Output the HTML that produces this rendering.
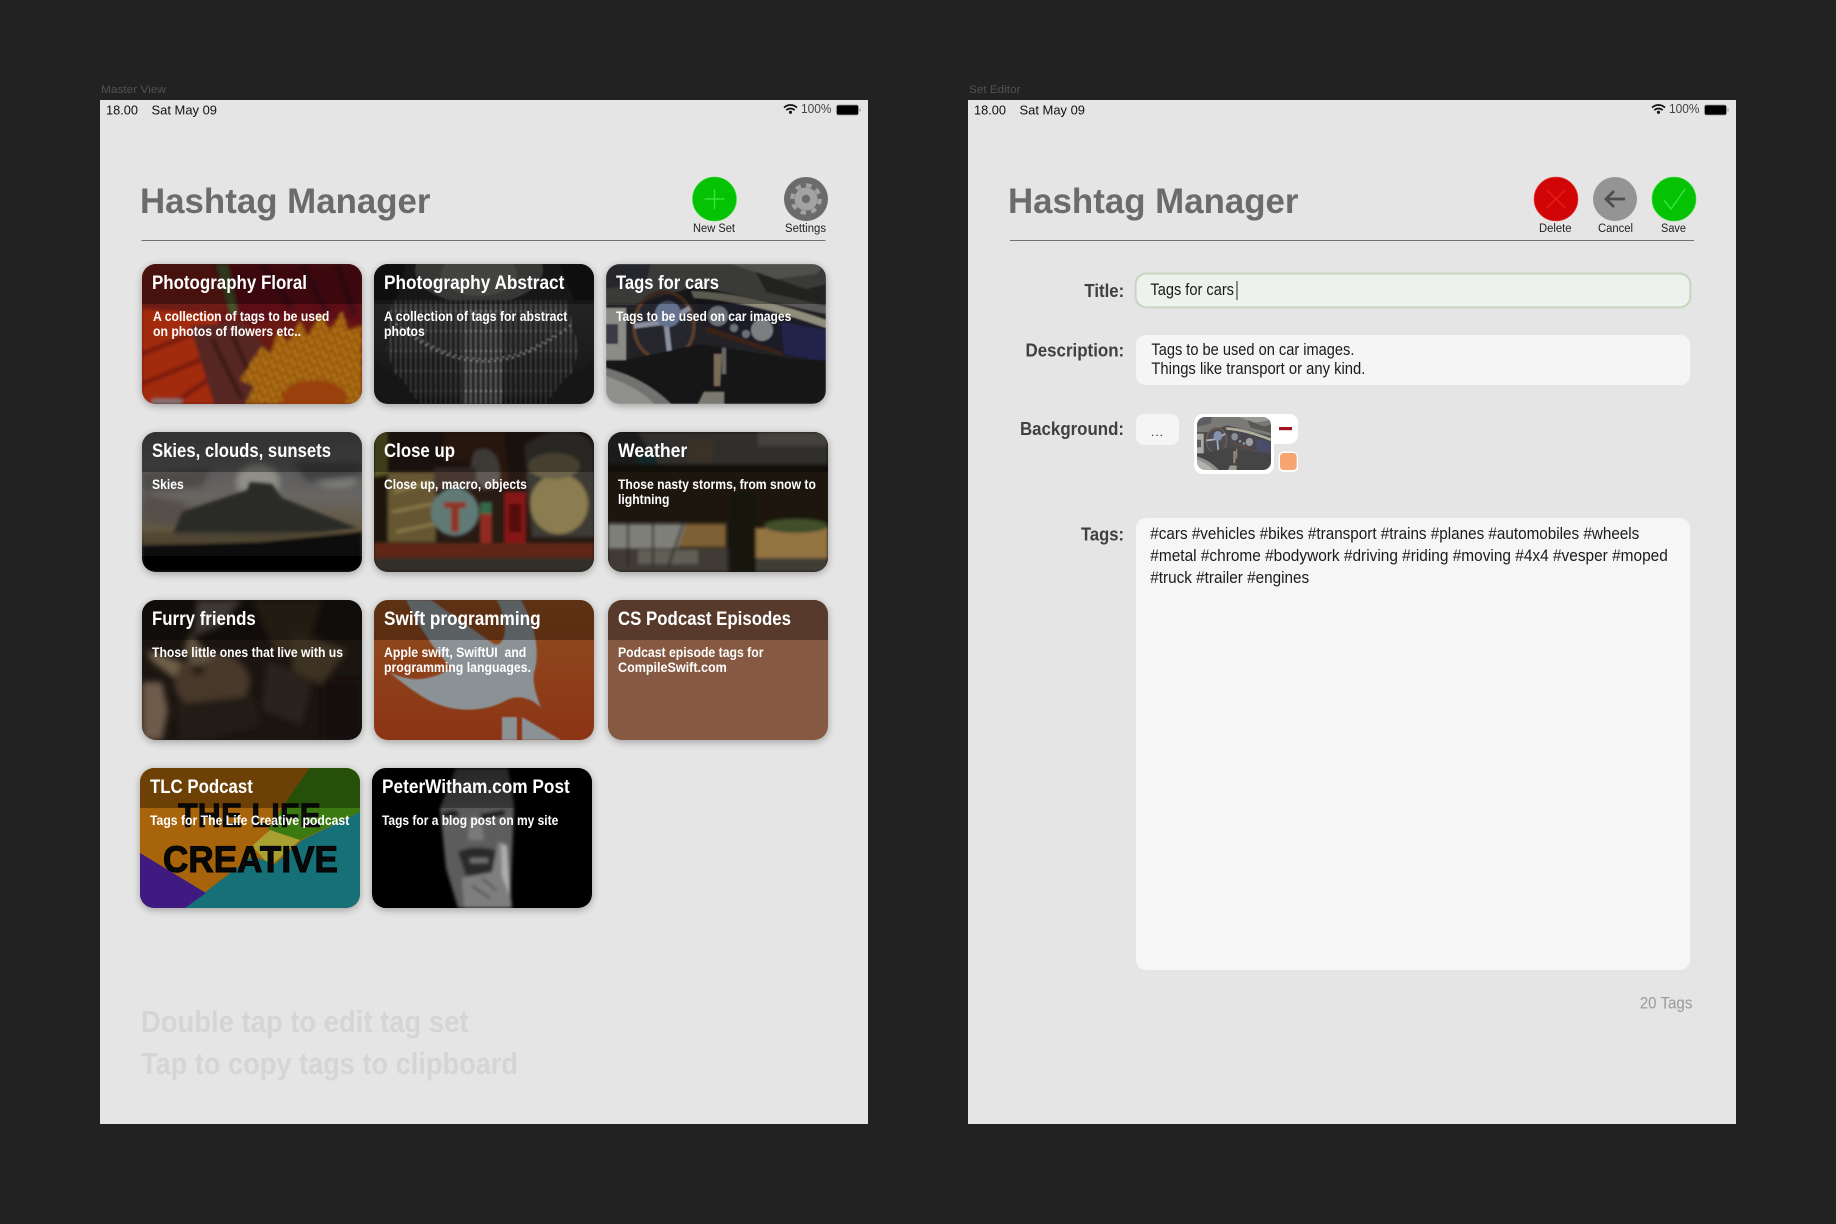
<!DOCTYPE html>
<html><head><meta charset="utf-8"><title>Hashtag Manager</title>
<style>
html,body{margin:0;padding:0;background:#222;width:1836px;height:1224px;overflow:hidden}
svg{display:block}
text{font-family:"Liberation Sans",sans-serif}
.t{font-size:19px;font-weight:700;fill:#fff}
.d{font-size:13.5px;font-weight:700;fill:#fff}
.h{fill:#000;fill-opacity:.35}
.lb{font-size:11.5px;fill:#222}
.st{font-size:13px;fill:#111}
.pc{font-size:13px;fill:#444}
.hd{font-size:35.5px;font-weight:700;fill:#6b6b6b}
.fl{font-size:18.5px;font-weight:700;fill:#404040}
.v{font-size:16.5px;fill:#1a1a1a}
.hint{font-size:31px;font-weight:700;fill:#d5d5d5}
</style></head><body>
<svg xmlns="http://www.w3.org/2000/svg" width="1836" height="1224" viewBox="0 0 1836 1224">
<defs>
<clipPath id="c"><rect width="220" height="140" rx="14"/></clipPath>
<clipPath id="th"><rect width="74" height="53" rx="8"/></clipPath>
<filter id="b" x="-10%" y="-10%" width="120%" height="120%"><feGaussianBlur stdDeviation="1.6"/></filter>
<filter id="b3" x="-15%" y="-15%" width="130%" height="130%"><feGaussianBlur stdDeviation="3.2"/></filter>
<filter id="bs" x="-10%" y="-10%" width="120%" height="120%"><feGaussianBlur stdDeviation="0.7"/></filter>
<filter id="sh" x="-15%" y="-20%" width="130%" height="140%"><feGaussianBlur stdDeviation="4"/></filter>
<filter id="br"><feComponentTransfer><feFuncR type="linear" slope="1.4" intercept=".05"/><feFuncG type="linear" slope="1.4" intercept=".05"/><feFuncB type="linear" slope="1.4" intercept=".05"/></feComponentTransfer></filter>
<pattern id="pet" width="9" height="9" patternUnits="userSpaceOnUse" patternTransform="rotate(20)"><rect width="9" height="9" fill="#9c5c0c"/><path d="M2 0L3 6M6 3L7 9" stroke="#d49420" stroke-width="1.3"/><path d="M4.5 0L5 5M0 5L1 9" stroke="#5a2406" stroke-width="1.2"/></pattern>
<pattern id="str" width="5" height="20" patternUnits="userSpaceOnUse"><rect width="5" height="20" fill="#262626"/><rect x="1" width="1.5" height="20" fill="#5c5c5c"/><rect x="1" y="6" width="1.8" height="2" fill="#858585"/></pattern>
<linearGradient id="sky" x1="0" y1="0" x2="0" y2="1"><stop offset="0" stop-color="#4c4c4e"/><stop offset=".45" stop-color="#686664"/><stop offset=".7" stop-color="#62573f"/><stop offset=".8" stop-color="#3a3226"/></linearGradient>
<linearGradient id="swf" x1="0" y1="0" x2="0" y2="1"><stop offset="0" stop-color="#8f4d1f"/><stop offset="1" stop-color="#8c3414"/></linearGradient>
<linearGradient id="peter" x1="0" y1="0" x2="0" y2="1"><stop offset="0" stop-color="#3a3a3a"/><stop offset=".35" stop-color="#5e5e5e"/><stop offset="1" stop-color="#5a5a5a"/></linearGradient>
<linearGradient id="absf" x1="0" y1="0" x2="0" y2="1"><stop offset="0" stop-color="#000" stop-opacity="0"/><stop offset="1" stop-color="#000" stop-opacity=".45"/></linearGradient>
<g id="car">
<rect width="220" height="140" fill="#242426"/>
<path d="M0 0H220V50L90 22L30 40L0 40Z" fill="#5a5a59"/>
<path d="M125 0L170 15L210 10L220 0Z" fill="#7a7a78"/>
<path d="M0 0H45L40 18L0 25Z" fill="#3a3c44"/>
<path d="M150 8L200 25L220 20V42L160 28Z" fill="#353533"/>
<path d="M85 27C130 28 180 42 220 56V64C180 50 130 36 88 34Z" fill="#8f8d7c"/>
<path d="M88 34C130 36 180 50 220 64V100L180 92L100 68Z" fill="#1f1b26"/>
<path d="M175 58L220 66V98L178 90Z" fill="#20204c"/>
<path d="M100 68L178 92L176 88L100 62Z" fill="#3a2018"/>
<circle cx="112" cy="52" r="10" fill="#6c7076"/><circle cx="156" cy="66" r="11" fill="#7b7e82"/>
<circle cx="128" cy="64" r="4" fill="#6c7078"/><circle cx="140" cy="70" r="4" fill="#6c7078"/>
<rect y="44" width="20" height="60" fill="#8c8c86"/>
<rect x="0" y="60" width="12" height="20" fill="#3a3a44"/>
<ellipse cx="58" cy="62" rx="30" ry="34" fill="#2a2a30" fill-opacity=".7" stroke="#5c3c2a" stroke-width="3.4"/>
<path d="M60 58L28 62M60 58L84 44M60 58L64 94" stroke="#8a909e" stroke-width="5" fill="none"/>
<circle cx="62" cy="50" r="13" fill="#667390"/>
<rect y="96" width="220" height="44" fill="#151517"/>
<path d="M95 80L220 100V140H0V100Z" fill="#121214"/>
<path d="M0 104C30 112 50 125 65 140H0Z" fill="#727270"/>
<path d="M0 112C22 120 40 130 48 140H0Z" fill="#90908c"/>
<path d="M108 90L116 90L114 122L108 122Z" fill="#7a6a58"/>
<path d="M116 84L120 84L120 110L116 110Z" fill="#666"/>
<path d="M92 140L98 128L118 128L118 140Z" fill="#7a7a70"/>
</g>
</defs>

<rect width="1836" height="1224" fill="#222"/>

<!-- MASTER -->
<text x="101" y="93" font-size="11" fill="#525252" textLength="65" lengthAdjust="spacingAndGlyphs">Master View</text>
<rect x="100" y="100" width="768" height="1024" fill="#e5e5e5"/>
<text class="st" x="106" y="114.5" textLength="32" lengthAdjust="spacingAndGlyphs">18.00</text>
<text class="st" x="151.5" y="114.5" textLength="65.5" lengthAdjust="spacingAndGlyphs">Sat May 09</text>
<g fill="none" stroke="#111" stroke-width="1.7"><path d="M784 107.6A9.5 9.5 0 0 1 797 107.6"/><path d="M786.3 110.2A6 6 0 0 1 794.7 110.2"/></g><circle cx="790.5" cy="112.3" r="1.6" fill="#111"/>
<text class="pc" x="801" y="113" textLength="30.5" lengthAdjust="spacingAndGlyphs">100%</text>
<rect x="836.5" y="105" width="22" height="10" rx="2" fill="#000" stroke="#999" stroke-width=".8"/><rect x="859.5" y="108.5" width="1" height="3" fill="#888"/>
<text class="hd" x="140" y="213" textLength="290.5" lengthAdjust="spacingAndGlyphs">Hashtag Manager</text>
<circle cx="714.5" cy="199" r="22" fill="#05c205" stroke="#38e038" stroke-width=".6"/>
<path d="M714.5 189V209M704.5 199H724.5" stroke="#36e636" stroke-width="1.4"/>
<text class="lb" x="693" y="232" textLength="42" lengthAdjust="spacingAndGlyphs">New Set</text>
<circle cx="806" cy="199" r="22" fill="#6b6b6b"/>
<circle cx="806" cy="199" r="11.5" fill="#a3a3a3"/>
<circle cx="806" cy="199" r="13.8" fill="none" stroke="#a3a3a3" stroke-width="4" stroke-dasharray="5.4 5.44"/>
<circle cx="806" cy="199" r="4.2" fill="#6b6b6b"/>
<text class="lb" x="785" y="232" textLength="41" lengthAdjust="spacingAndGlyphs">Settings</text>
<rect x="141.5" y="240" width="684" height="1" fill="#717171"/>

<!-- Card 1 -->
<g transform="translate(142,264)"><rect y="2" width="220" height="140" rx="14" opacity=".3" filter="url(#sh)"/>
<g clip-path="url(#c)"><rect width="220" height="140" fill="#6a1814"/>
<g filter="url(#b)">
<path d="M0 0H220V60L150 50L110 60L80 40L70 0Z" fill="#5c0f18"/>
<path d="M120 0L150 45M160 0L185 48M195 0L212 50" stroke="#420a12" stroke-width="6" fill="none"/>
<path d="M0 0H70L85 45L60 50L0 60Z" fill="#6e1a12"/>
<path d="M0 45L75 50L88 140H0Z" fill="#a22c0e"/>
<path d="M0 90L50 70M0 120L60 95M30 140L75 110" stroke="#7c1e0c" stroke-width="5" fill="none"/>
<path d="M74 0L86 0L96 50L88 50Z" fill="#46522a"/>
<path d="M48 62L100 58L140 100L118 140H72Z" fill="#562720"/>
<path d="M70 75L100 135M90 70L112 120" stroke="#3c1a18" stroke-width="5" fill="none"/>
<path d="M108 100L120 82L128 90L136 66L146 78L158 56L166 72L178 50L188 66L200 48L206 66L220 62V140H104L112 122L98 116Z" fill="url(#pet)"/>
<ellipse cx="172" cy="134" rx="32" ry="18" fill="#9a4010"/>
<rect x="10" y="135" width="30" height="5" fill="#807878"/>
</g><rect class="h" width="220" height="40"/></g>
<text class="t" x="10" y="25" textLength="155" lengthAdjust="spacingAndGlyphs">Photography Floral</text>
<text class="d" x="11" y="57" textLength="176.3" lengthAdjust="spacingAndGlyphs">A collection of tags to be used</text>
<text class="d" x="11" y="72" textLength="148" lengthAdjust="spacingAndGlyphs">on photos of flowers etc..</text></g>

<!-- Card 2 -->
<g transform="translate(374,264)"><rect y="2" width="220" height="140" rx="14" opacity=".3" filter="url(#sh)"/>
<g clip-path="url(#c)"><rect width="220" height="140" fill="#242424"/>
<g filter="url(#bs)">
<ellipse cx="105" cy="6" rx="64" ry="34" fill="#545452"/>
<ellipse cx="105" cy="10" rx="38" ry="22" fill="#676763"/>
<path d="M18 36H192L205 85L188 140H32L12 85Z" fill="url(#str)" opacity=".8"/>
<rect x="0" y="36" width="220" height="104" fill="url(#absf)"/>
<path d="M88 36H128V140H88Z" fill="url(#str)"/>
<path d="M22 60Q110 135 198 60" stroke="#9a9a9a" stroke-width="1.6" stroke-dasharray="1.5 4.5" fill="none"/>
<path d="M38 70Q110 120 182 70" stroke="#8a8a8a" stroke-width="1.4" stroke-dasharray="1.5 4.5" fill="none"/>
<path d="M0 95L28 115L45 140H0Z" fill="#141414"/><path d="M220 95L190 115L172 140H220Z" fill="#141414"/>
<path d="M0 0H32L22 36H0Z" fill="#161616"/><path d="M220 0H185L200 36H220Z" fill="#161616"/>
</g><rect class="h" width="220" height="40"/></g>
<text class="t" x="10" y="25" textLength="180.4" lengthAdjust="spacingAndGlyphs">Photography Abstract</text>
<text class="d" x="10" y="57" textLength="183.4" lengthAdjust="spacingAndGlyphs">A collection of tags for abstract</text>
<text class="d" x="10" y="72" textLength="40.8" lengthAdjust="spacingAndGlyphs">photos</text></g>

<!-- Card 3 -->
<g transform="translate(606,264)"><rect y="2" width="220" height="140" rx="14" opacity=".3" filter="url(#sh)"/>
<g clip-path="url(#c)"><g filter="url(#bs)"><use href="#car"/></g><rect class="h" width="220" height="40"/></g>
<text class="t" x="10" y="25" textLength="103" lengthAdjust="spacingAndGlyphs">Tags for cars</text>
<text class="d" x="10" y="57" textLength="175.3" lengthAdjust="spacingAndGlyphs">Tags to be used on car images</text></g>

<!-- Card 4 -->
<g transform="translate(142,432)"><rect y="2" width="220" height="140" rx="14" opacity=".3" filter="url(#sh)"/>
<g clip-path="url(#c)"><rect width="220" height="140" fill="url(#sky)"/>
<g filter="url(#b3)">
<ellipse cx="116" cy="50" rx="22" ry="18" fill="#8e8e86"/>
<ellipse cx="195" cy="48" rx="20" ry="8" fill="#7e7e78"/>
<path d="M0 40L70 35L60 55L0 60Z" fill="#4e4b49"/>
<path d="M150 30H220V45L165 50Z" fill="#424244"/>
<path d="M0 62L40 70L60 85L30 95L0 90Z" fill="#57504a"/>
</g>
<g filter="url(#b)">
<path d="M40 80L75 68L105 58L108 50L130 52L140 66L175 80L215 96L130 106L30 104Z" fill="#2b2a26"/>
<path d="M0 100H220V112H0Z" fill="#544a34" fill-opacity=".7"/>
<path d="M0 114L120 110L220 100V140H0Z" fill="#0d0b09"/>
<rect y="124" width="220" height="16" fill="#020202"/>
</g><rect class="h" width="220" height="40"/></g>
<text class="t" x="10" y="25" textLength="179" lengthAdjust="spacingAndGlyphs">Skies, clouds, sunsets</text>
<text class="d" x="10" y="57" textLength="31.7" lengthAdjust="spacingAndGlyphs">Skies</text></g>

<!-- Card 5 -->
<g transform="translate(374,432)"><rect y="2" width="220" height="140" rx="14" opacity=".3" filter="url(#sh)"/>
<g clip-path="url(#c)"><rect width="220" height="140" fill="#271b14"/>
<g filter="url(#b)">
<path d="M0 0H14V42L0 45Z" fill="#5e5e28"/>
<path d="M0 45H14V110H0Z" fill="#1c120c"/>
<rect x="14" y="40" width="48" height="70" fill="#665630"/>
<path d="M20 60L55 50M18 80L58 72M22 100L60 92" stroke="#8a7a4a" stroke-width="3"/>
<path d="M70 0L130 0L135 50L115 60L100 30L70 30Z" fill="#3a2016"/>
<path d="M100 20C115 10 130 25 125 50L110 58L95 40Z" fill="#5e5a52"/>
<rect x="60" y="35" width="42" height="22" fill="#463830"/>
<circle cx="81" cy="80" r="24" fill="#607a76"/>
<path d="M70 70H92V76H85V100H77V76H70Z" fill="#8f3024"/>
<rect x="106" y="70" width="12" height="12" fill="#34684a"/><rect x="106" y="82" width="12" height="30" fill="#922a20"/>
<rect x="130" y="60" width="22" height="53" fill="#861216"/>
<rect x="135" y="72" width="12" height="28" fill="#520e10"/>
<path d="M150 14C170 -6 210 -6 220 14V105H158Z" fill="#3e3a34"/>
<ellipse cx="185" cy="72" rx="29" ry="30" fill="#8b7d50"/>
<ellipse cx="180" cy="34" rx="26" ry="13" fill="#6c624c"/>
<rect y="111" width="220" height="15" fill="#5e2812"/>
<rect y="126" width="220" height="14" fill="#322e2b"/>
</g><rect class="h" width="220" height="40"/></g>
<text class="t" x="10" y="25" textLength="71" lengthAdjust="spacingAndGlyphs">Close up</text>
<text class="d" x="10" y="57" textLength="142.8" lengthAdjust="spacingAndGlyphs">Close up, macro, objects</text></g>

<!-- Card 6 -->
<g transform="translate(608,432)"><rect y="2" width="220" height="140" rx="14" opacity=".3" filter="url(#sh)"/>
<g clip-path="url(#c)"><rect width="220" height="140" fill="#1c1811"/>
<g filter="url(#b)">
<rect width="220" height="32" fill="#4c4a44"/>
<path d="M0 0H30L50 32H0Z" fill="#2a2c2a"/>
<path d="M28 20L48 20L50 60L38 60Z" fill="#1c3c40"/>
<path d="M80 8H105V30H80Z" fill="#5a4e3a"/><path d="M150 0H220V14H150Z" fill="#6a6660"/>
<rect y="32" width="220" height="58" fill="#1b1610"/>
<path d="M0 92H78L70 116H0Z" fill="#80807a"/>
<path d="M78 92H118V115H70Z" fill="#7e6134"/>
<rect x="148" y="96" width="72" height="30" fill="#947542"/>
<ellipse cx="188" cy="94" rx="32" ry="7" fill="#40502a"/>
<rect x="122" y="60" width="26" height="80" fill="#15120d"/>
<rect y="116" width="120" height="24" fill="#3f3b34"/>
<rect x="30" y="118" width="60" height="14" fill="#605e56"/>
<rect x="148" y="126" width="72" height="14" fill="#3f3c34"/>
<path d="M20 92V135M45 92V135M75 92L60 135" stroke="#2a2822" stroke-width="2"/>
</g><rect class="h" width="220" height="40"/></g>
<text class="t" x="10" y="25" textLength="69.3" lengthAdjust="spacingAndGlyphs">Weather</text>
<text class="d" x="10" y="57" textLength="197.9" lengthAdjust="spacingAndGlyphs">Those nasty storms, from snow to</text>
<text class="d" x="10" y="72" textLength="51.4" lengthAdjust="spacingAndGlyphs">lightning</text></g>

<!-- Card 7 -->
<g transform="translate(142,600)"><rect y="2" width="220" height="140" rx="14" opacity=".3" filter="url(#sh)"/>
<g clip-path="url(#c)"><rect width="220" height="140" fill="#1b1510"/>
<g filter="url(#b3)">
<path d="M55 0H100L78 26L52 36Z" fill="#5e574f"/>
<path d="M110 0H180L165 50L135 55Z" fill="#352a1e"/>
<path d="M150 30L205 50L180 85L150 70Z" fill="#3e3224"/>
<ellipse cx="70" cy="82" rx="38" ry="30" fill="#46382a"/>
<path d="M6 50L40 62L32 78L8 60Z" fill="#6e5e4a"/>
<path d="M48 32L70 60L52 66L42 50Z" fill="#5e5240"/>
<ellipse cx="56" cy="70" rx="6" ry="5" fill="#1c120c"/>
<path d="M0 82H20L26 110L20 140H0Z" fill="#6e5c4c"/>
<path d="M34 104L110 96L120 125L60 140H38Z" fill="#221a12"/>
<path d="M125 60L170 80L160 125L120 110Z" fill="#29221a"/>
<rect x="180" y="80" width="40" height="60" fill="#120e0a"/>
</g><rect class="h" width="220" height="40"/></g>
<text class="t" x="10" y="25" textLength="103.8" lengthAdjust="spacingAndGlyphs">Furry friends</text>
<text class="d" x="10" y="57" textLength="191" lengthAdjust="spacingAndGlyphs">Those little ones that live with us</text></g>

<!-- Card 8 -->
<g transform="translate(374,600)"><rect y="2" width="220" height="140" rx="14" opacity=".3" filter="url(#sh)"/>
<g clip-path="url(#c)"><rect width="220" height="140" fill="url(#swf)"/>
<g fill="#8b9296" filter="url(#bs)">
<path d="M32 0L57 0L117 42C127 50 133 37 130 20C128 10 125 3 122 0L147 0C160 23 167 50 160 73C158 83 163 97 167 108C157 97 143 95 133 100C110 113 73 115 43 93C33 87 23 78 15 72C35 82 55 82 78 68C60 50 47 30 32 0Z"/>
<path d="M128 117H143V140H128Z"/>
<path d="M148 117L187 140H148Z"/>
</g><rect class="h" width="220" height="40"/></g>
<text class="t" x="10" y="25" textLength="156.6" lengthAdjust="spacingAndGlyphs">Swift programming</text>
<text class="d" x="10" y="57" textLength="142.3" lengthAdjust="spacingAndGlyphs" xml:space="preserve">Apple swift, SwiftUI  and</text>
<text class="d" x="10" y="72" textLength="147" lengthAdjust="spacingAndGlyphs">programming languages.</text></g>

<!-- Card 9 -->
<g transform="translate(608,600)"><rect y="2" width="220" height="140" rx="14" opacity=".3" filter="url(#sh)"/>
<g clip-path="url(#c)"><rect width="220" height="140" fill="#865a42"/><rect class="h" width="220" height="40"/></g>
<text class="t" x="10" y="25" textLength="173" lengthAdjust="spacingAndGlyphs">CS Podcast Episodes</text>
<text class="d" x="10" y="57" textLength="145.5" lengthAdjust="spacingAndGlyphs">Podcast episode tags for</text>
<text class="d" x="10" y="72" textLength="108.8" lengthAdjust="spacingAndGlyphs">CompileSwift.com</text></g>

<!-- Card 10 -->
<g transform="translate(140,768)"><rect y="2" width="220" height="140" rx="14" opacity=".3" filter="url(#sh)"/>
<g clip-path="url(#c)"><rect width="220" height="140" fill="#a8640a"/>
<path d="M170 0H220V44L160 72L128 62L155 20Z" fill="#3b7a10"/>
<path d="M130 62L160 72L130 98L112 78Z" fill="#a8a030"/>
<path d="M220 44V140H45L112 88L135 96L162 72Z" fill="#167078"/>
<path d="M0 85L66 125L45 140H0Z" fill="#3f1a80"/>
<text x="38" y="59" font-size="34" font-weight="700" fill="#0c0c0c" stroke="#000" stroke-width=".6" textLength="143" lengthAdjust="spacingAndGlyphs">THE LIFE</text>
<text x="23" y="104" font-size="37" font-weight="700" fill="#080808" stroke="#000" stroke-width="1" textLength="175" lengthAdjust="spacingAndGlyphs">CREATIVE</text>
<rect class="h" width="220" height="40"/></g>
<text class="t" x="10" y="25" textLength="102.8" lengthAdjust="spacingAndGlyphs">TLC Podcast</text>
<text class="d" x="10" y="57" textLength="199.3" lengthAdjust="spacingAndGlyphs">Tags for The Life Creative podcast</text></g>

<!-- Card 11 -->
<g transform="translate(372,768)"><rect y="2" width="220" height="140" rx="14" opacity=".3" filter="url(#sh)"/>
<g clip-path="url(#c)"><rect width="220" height="140" fill="#000"/>
<g filter="url(#b)">
<path d="M84 0H136L142 36L140 90L138 140H86L74 100L68 40Z" fill="url(#peter)"/>
<path d="M70 44L84 42L88 48L72 50Z" fill="#1c1c1c"/><path d="M108 46L132 42L134 47L110 52Z" fill="#1c1c1c"/>
<path d="M98 50L108 50L112 72L96 72Z" fill="#7a7a7a"/>
<path d="M86 84C95 78 118 78 126 84L120 106L94 108Z" fill="#2c2c2c"/>
<path d="M98 90H116V95H98Z" fill="#6e6e6e"/>
<path d="M126 74L134 76L140 140H92L90 110L120 104Z" fill="#7e7e7e"/>
<path d="M129 76L135 78L138 128L130 108Z" fill="#adadad"/>
<path d="M100 118L118 130M110 110L124 122" stroke="#333" stroke-width="1.4"/>
</g><rect class="h" width="220" height="40"/></g>
<text class="t" x="10" y="25" textLength="187.8" lengthAdjust="spacingAndGlyphs">PeterWitham.com Post</text>
<text class="d" x="10" y="57" textLength="176.3" lengthAdjust="spacingAndGlyphs">Tags for a blog post on my site</text></g>

<text class="hint" x="141" y="1032" textLength="327.5" lengthAdjust="spacingAndGlyphs">Double tap to edit tag set</text>
<text class="hint" x="141" y="1074" textLength="377" lengthAdjust="spacingAndGlyphs">Tap to copy tags to clipboard</text>

<!-- EDITOR -->
<text x="969" y="93" font-size="11" fill="#525252" textLength="51.5" lengthAdjust="spacingAndGlyphs">Set Editor</text>
<rect x="968" y="100" width="768" height="1024" fill="#e5e5e5"/>
<text class="st" x="974" y="114.5" textLength="32" lengthAdjust="spacingAndGlyphs">18.00</text>
<text class="st" x="1019.5" y="114.5" textLength="65.5" lengthAdjust="spacingAndGlyphs">Sat May 09</text>
<g transform="translate(868,0)"><g fill="none" stroke="#111" stroke-width="1.7"><path d="M784 107.6A9.5 9.5 0 0 1 797 107.6"/><path d="M786.3 110.2A6 6 0 0 1 794.7 110.2"/></g><circle cx="790.5" cy="112.3" r="1.6" fill="#111"/>
<text class="pc" x="801" y="113" textLength="30.5" lengthAdjust="spacingAndGlyphs">100%</text>
<rect x="836.5" y="105" width="22" height="10" rx="2" fill="#000" stroke="#999" stroke-width=".8"/><rect x="859.5" y="108.5" width="1" height="3" fill="#888"/></g>
<text class="hd" x="1008" y="213" textLength="290.5" lengthAdjust="spacingAndGlyphs">Hashtag Manager</text>

<circle cx="1556" cy="199" r="22" fill="#d10505" stroke="#f04040" stroke-width=".6"/>
<path d="M1547 190L1565 208M1565 190L1547 208" stroke="#e81a1a" stroke-width="1.5"/>
<text class="lb" x="1539" y="232" textLength="32.5" lengthAdjust="spacingAndGlyphs">Delete</text>
<circle cx="1615" cy="199" r="22" fill="#949494"/>
<path d="M1625 199H1607M1614 191L1606 199L1614 207" fill="none" stroke="#4d4d4d" stroke-width="2.8"/>
<text class="lb" x="1598" y="232" textLength="35" lengthAdjust="spacingAndGlyphs">Cancel</text>
<circle cx="1674" cy="199" r="22" fill="#05c205" stroke="#38e038" stroke-width=".6"/>
<path d="M1664 200L1671 209L1685 189" fill="none" stroke="#36e636" stroke-width="1.5"/>
<text class="lb" x="1661" y="232" textLength="25" lengthAdjust="spacingAndGlyphs">Save</text>
<rect x="1010" y="240" width="684" height="1" fill="#717171"/>

<text class="fl" x="1084.4" y="297" textLength="39.8" lengthAdjust="spacingAndGlyphs">Title:</text>
<rect x="1135" y="273" width="556" height="35" rx="11" fill="#a9c7a0" opacity=".7" filter="url(#bs)"/>
<rect x="1136.5" y="274.5" width="553" height="32" rx="10" fill="#eef2ec"/>
<text class="v" x="1150.4" y="295" textLength="83.6" lengthAdjust="spacingAndGlyphs">Tags for cars</text>
<rect x="1236.5" y="281" width="1" height="19" fill="#222"/>

<text class="fl" x="1025.5" y="356.7" textLength="98.7" lengthAdjust="spacingAndGlyphs">Description:</text>
<rect x="1136" y="335" width="554" height="50" rx="10" fill="#f5f5f5"/>
<text class="v" x="1151.4" y="355" textLength="203" lengthAdjust="spacingAndGlyphs">Tags to be used on car images.</text>
<text class="v" x="1151.4" y="374" textLength="214" lengthAdjust="spacingAndGlyphs">Things like transport or any kind.</text>

<text class="fl" x="1020" y="435" textLength="104" lengthAdjust="spacingAndGlyphs">Background:</text>
<rect x="1136" y="414" width="43" height="31" rx="8" fill="#f5f5f5"/>
<text x="1151" y="436" font-size="12" fill="#222" textLength="12">...</text>
<rect x="1194" y="414" width="80" height="60" rx="9" fill="#fff"/>
<rect x="1260" y="414" width="38" height="30" rx="9" fill="#fff"/>
<g transform="translate(1197,417)"><g clip-path="url(#th)"><g transform="scale(.336,.379)" filter="url(#br)"><use href="#car"/></g></g></g>
<rect x="1279" y="427" width="13" height="3.2" fill="#a31020"/>
<rect x="1278.5" y="451.5" width="19.5" height="20.5" rx="5" fill="#fff"/>
<rect x="1280" y="453" width="16.7" height="17" rx="3.5" fill="#f7a672"/>

<text class="fl" x="1081" y="540.7" textLength="43" lengthAdjust="spacingAndGlyphs">Tags:</text>
<rect x="1136" y="518" width="554" height="452" rx="10" fill="#f6f6f6"/>
<text class="v" x="1150.3" y="539" textLength="489" lengthAdjust="spacingAndGlyphs">#cars #vehicles #bikes #transport #trains #planes #automobiles #wheels</text>
<text class="v" x="1150.3" y="561" textLength="517.5" lengthAdjust="spacingAndGlyphs">#metal #chrome #bodywork #driving #riding #moving #4x4 #vesper #moped</text>
<text class="v" x="1150.3" y="583" textLength="158.8" lengthAdjust="spacingAndGlyphs">#truck #trailer #engines</text>
<text x="1639.7" y="1008.6" font-size="16.5" fill="#9a9a9a" textLength="52.7" lengthAdjust="spacingAndGlyphs">20 Tags</text>
</svg>
</body></html>
